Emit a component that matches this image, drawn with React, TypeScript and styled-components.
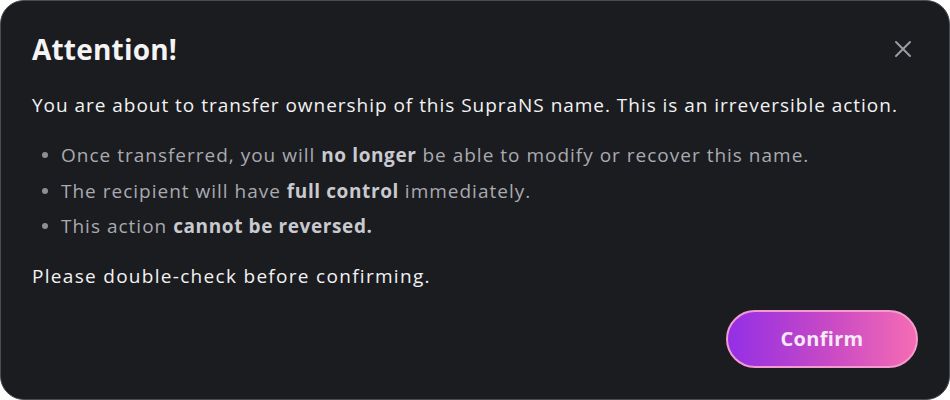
import styled, { createGlobalStyle } from "styled-components";

const GlobalStyle = createGlobalStyle`
  html, body {
    margin: 0;
    padding: 0;
    background: #ffffff;
  }
  * {
    box-sizing: border-box;
  }
`;

const Modal = styled.div`
  width: 950px;
  height: 400px;
  background: #1b1c20;
  border: 1px solid #4a4c53;
  border-radius: 24px;
  padding: 28px 32px 31px 31px;
  display: flex;
  flex-direction: column;
  font-family: "Open Sans", "Liberation Sans", sans-serif;
  color: #f2f2f3;
`;

const Header = styled.div`
  display: flex;
  align-items: center;
  justify-content: space-between;
`;

const Title = styled.h2`
  margin: 0;
  font-size: 28px;
  font-weight: 700;
  line-height: 40px;
  letter-spacing: 0.2px;
  color: #f4f4f5;
`;

const CloseButton = styled.button`
  background: none;
  border: none;
  padding: 0;
  width: 24px;
  height: 24px;
  margin-right: 2px;
  color: #9b9ca1;
  cursor: pointer;
  display: flex;
  align-items: center;
  justify-content: center;
`;

const Lead = styled.p`
  margin: 22px 0 0;
  font-size: 19px;
  line-height: 28px;
  letter-spacing: 0.97px;
  color: #f2f2f3;
`;

const List = styled.ul`
  margin: 22px 0 0;
  padding: 0 0 0 29px;
  list-style: none;
  display: flex;
  flex-direction: column;
  gap: 7.5px;
`;

const Item = styled.li`
  position: relative;
  font-size: 19px;
  line-height: 28px;
  letter-spacing: 1px;
  color: #a9aab0;

  &::before {
    content: "";
    position: absolute;
    left: -19px;
    top: 11px;
    width: 6px;
    height: 6px;
    border-radius: 50%;
    background: #8e8f95;
  }

  strong {
    font-weight: 700;
    letter-spacing: 0.6px;
    color: #c9cacf;
  }
`;

const Note = styled.p`
  margin: 22px 0 0;
  font-size: 19px;
  line-height: 28px;
  letter-spacing: 1.3px;
  color: #f2f2f3;
`;

const Footer = styled.div`
  margin-top: auto;
  display: flex;
  justify-content: flex-end;
`;

const ConfirmButton = styled.button`
  width: 192px;
  height: 58px;
  margin-right: -1px;
  padding-bottom: 2px;
  border-radius: 29px;
  border: 2px solid #f49ad0;
  background: linear-gradient(90deg, #932fe6 0%, #c94ac4 55%, #f56cb4 100%);
  color: #f6e8f6;
  font-family: "Open Sans", "Liberation Sans", sans-serif;
  font-size: 20px;
  font-weight: 700;
  letter-spacing: 0.3px;
  cursor: pointer;
`;

const CloseIcon = () => (
  <svg width="20" height="20" viewBox="0 0 20 20" fill="none">
    <path
      d="M3 3L17 17M17 3L3 17"
      stroke="currentColor"
      strokeWidth="2"
      strokeLinecap="round"
    />
  </svg>
);

export default function App() {
  return (
    <>
      <GlobalStyle />
      <Modal>
        <Header>
          <Title>Attention!</Title>
          <CloseButton aria-label="Close">
            <CloseIcon />
          </CloseButton>
        </Header>
        <Lead>
          You are about to transfer ownership of this SupraNS name. This is an
          irreversible action.
        </Lead>
        <List>
          <Item>
            Once transferred, you will <strong>no longer</strong> be able to
            modify or recover this name.
          </Item>
          <Item>
            The recipient will have <strong>full control</strong> immediately.
          </Item>
          <Item>
            This action <strong>cannot be reversed.</strong>
          </Item>
        </List>
        <Note>Please double-check before confirming.</Note>
        <Footer>
          <ConfirmButton>Confirm</ConfirmButton>
        </Footer>
      </Modal>
    </>
  );
}
